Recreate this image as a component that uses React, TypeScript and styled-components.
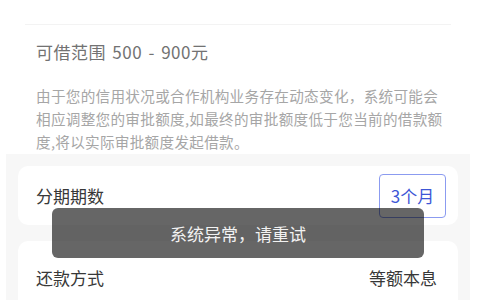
import styled, { createGlobalStyle } from 'styled-components';

const GlobalStyle = createGlobalStyle`
    html, body {
        margin: 0;
        padding: 0;
        background: #ffffff;
        font-family: 'Noto Sans CJK SC', 'Noto Sans', sans-serif;
    }
`;

const Page = styled.div`
    position: relative;
    width: 480px;
    height: 300px;
    overflow: hidden;
    background: #ffffff;
`;

const TopStub = styled.div`
    height: 24px;
    overflow: hidden;
    padding: 0 40px;
`;

const StubTitle = styled.div`
    margin-top: -21px;
    font-size: 18px;
    line-height: 20px;
    color: #aaa;
`;

const Divider = styled.div`
    height: 1px;
    margin: 0 29px 0 25px;
    background: #f3f3f3;
`;

const Info = styled.div`
    padding: 15px 36px 0 36px;
`;

const Range = styled.div`
    font-size: 17px;
    line-height: 24px;
    color: #727272;
    letter-spacing: 0.5px;
    word-spacing: 2px;
`;

const Notice = styled.p`
    margin: 20px 0 0 0;
    font-size: 14.6px;
    line-height: 23px;
    color: #a6a6a6;
    letter-spacing: 0.3px;
`;

const Gray = styled.div`
    margin: 1px 10px 0 6px;
    padding: 12px 12px 0 12px;
    background: #f7f7f7;
    display: flex;
    flex-direction: column;
    gap: 16px;
    height: 200px;
`;

const Card = styled.div<{ $height: number; $right: number }>`
    display: flex;
    align-items: center;
    justify-content: space-between;
    height: ${(p) => p.$height}px;
    padding: 0 ${(p) => p.$right}px 0 18px;
    background: #ffffff;
    border-radius: 10px;
    flex-shrink: 0;
`;

const Label = styled.span`
    font-size: 17px;
    color: #383838;
`;

const Value = styled.span`
    font-size: 17px;
    color: #383838;
`;

const TermButton = styled.button`
    width: 67px;
    height: 44px;
    border: 1px solid #8b9bf0;
    border-radius: 4px;
    background: #ffffff;
    color: #3d56d6;
    font-family: inherit;
    font-size: 17px;
    padding: 0;
`;

const Toast = styled.div`
    position: absolute;
    left: 52px;
    top: 208px;
    width: 372px;
    height: 50px;
    border-radius: 6px;
    background: rgba(0, 0, 0, 0.6);
    color: #f2f2f2;
    font-size: 17px;
    display: flex;
    align-items: center;
    justify-content: center;
`;

export default function App() {
    return (
        <>
            <GlobalStyle />
            <Page>
                <TopStub>
                    <StubTitle>借款金额（元）</StubTitle>
                </TopStub>
                <Divider />
                <Info>
                    <Range>可借范围 500 - 900元</Range>
                    <Notice>
                        由于您的信用状况或合作机构业务存在动态变化，系统可能会相应调整您的审批额度,如最终的审批额度低于您当前的借款额度,将以实际审批额度发起借款。
                    </Notice>
                </Info>
                <Gray>
                    <Card $height={59} $right={12}>
                        <Label>分期期数</Label>
                        <TermButton>3个月</TermButton>
                    </Card>
                    <Card $height={72} $right={21}>
                        <Label>还款方式</Label>
                        <Value>等额本息</Value>
                    </Card>
                </Gray>
                <Toast>系统异常，请重试</Toast>
            </Page>
        </>
    );
}
